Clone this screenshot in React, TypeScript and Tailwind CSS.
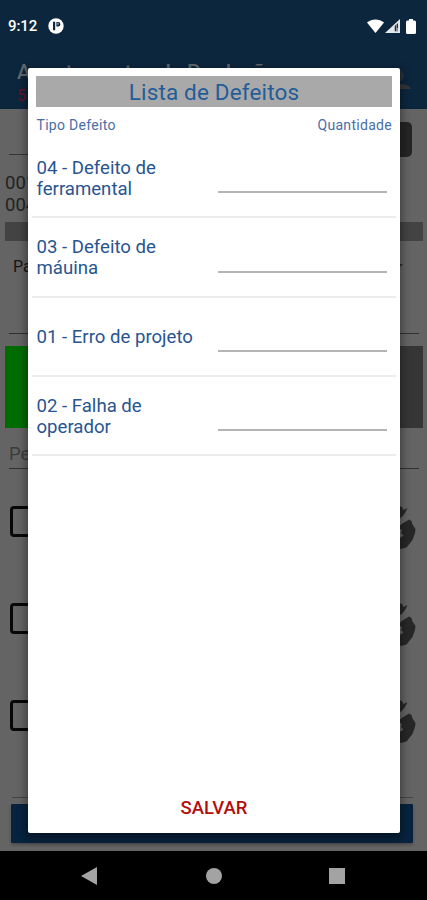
import React from 'react';

const defects = [
  { code: '04', name: 'Defeito de ferramental' },
  { code: '03', name: 'Defeito de máuina' },
  { code: '01', name: 'Erro de projeto' },
  { code: '02', name: 'Falha de operador' },
];

const StatusBar = () => (
  <div className="flex h-[52px] items-center px-2 text-white">
    <span className="text-[15px] font-medium leading-none tracking-[-0.1px]">9:12</span>
    <svg className="ml-[11px]" width="16" height="16" viewBox="0 0 16 16">
      <circle cx="8" cy="8" r="7.7" fill="#fff" />
      <path d="M5 3.800h2.200v8.400H5z M8.400 4h1.800a2.200 2.200 0 0 1 0 4.400H8.400z" fill="#0c263e" />
      <path d="M9.200 4.800h1.600v2H9.200z" fill="#8795a2" />
    </svg>
    <div className="flex-1" />
    <svg width="17" height="14" viewBox="0 0 17 14">
      <path d="M0 3.600C4.800-.4 12.200-.4 17 3.600L8.500 14z" fill="#fff" />
    </svg>
    <svg className="ml-px" width="15" height="14" viewBox="0 0 15 14">
      <path d="M15 0v14H0z" fill="#e4e7ea" />
      <path d="M13 3.500v9H9.500V7z" fill="#8b969f" />
      <path d="M10.500 6.500v5.500M12.500 5v4" stroke="#1c3348" strokeWidth="1.100" fill="none" />
    </svg>
    <svg className="ml-1.5 mr-[3px]" width="10" height="15" viewBox="0 0 10 15">
      <path d="M3 0h4v1.500h1.500Q10 1.500 10 3v10.500Q10 15 8.500 15h-7Q0 15 0 13.500V3q0-1.500 1.500-1.500H3z" fill="#fff" />
    </svg>
  </div>
);

const HandIcon = () => (
  <svg width="33" height="44" viewBox="0 0 33 44">
    <path d="M16 0l3 1L20.500 4L24.500 2L22 7L18 12L15 9z" fill="#272727" />
    <path d="M15 22L18 18.500L26 13.500L28.500 15L29.500 18.500L32.500 23L32 27L29.500 34L23.500 41.500L18 43L12 40L12 32L17.500 31.500L20.500 29.500L18 27L19 24z" fill="#272727" />
  </svg>
);

const BackgroundScreen = () => (
  <div className="flex h-[851px] flex-col bg-[#646464]">
    <header className="h-[109px] shrink-0 bg-[#0c263e]">
      <StatusBar />
      <div className="flex justify-between pl-[17px] pr-[14px] pt-2">
        <div>
          <div className="whitespace-nowrap text-[20.800px] font-medium leading-[24px] text-[#62686d]">Apontamentos de Produção</div>
          <div className="mt-[2px] text-[16px] leading-[20px] text-[#6c1126]">5</div>
        </div>
        <svg className="mt-[7px]" width="24" height="24" viewBox="0 0 24 24">
          <circle cx="9" cy="9" r="6" fill="#28323a" />
          <path d="M0 22q2-5 11-5q8 0 11 5z" fill="#34373a" />
        </svg>
      </div>
    </header>
    <div className="flex h-[48px] shrink-0 items-end justify-between pl-[9px] pr-[15px]">
      <div className="mb-[2px] h-px w-[300px] bg-[#353535]" />
      <div className="h-[35px] w-[42px] rounded-[5px] bg-[#252525]" />
    </div>
    <div className="mt-[16px] h-[43px] shrink-0 pl-[5px] text-[18.500px] leading-[21.500px] text-[#222]">
      <div>001</div>
      <div>004</div>
    </div>
    <div className="ml-[5px] mr-[4px] mt-[6px] h-[19px] shrink-0 bg-[#434343]" />
    <div className="flex h-[92px] shrink-0 justify-between pl-[13px] pr-[24px] pt-[16px]">
      <span className="text-[16px] leading-[20px] text-[#151515]">Parada</span>
      <svg className="mt-[7px]" width="9" height="5" viewBox="0 0 9 5">
        <path d="M0 0h9L4.500 4.500z" fill="#2c2c2c" />
      </svg>
    </div>
    <div className="ml-[9px] mr-[8px] h-px shrink-0 bg-[#303030]" />
    <div className="ml-[5px] mr-[4px] mt-[12px] flex h-[82px] shrink-0">
      <div className="flex-1 bg-[#006c00]" />
      <div className="flex-1 bg-[#363636]" />
    </div>
    <div className="ml-[9px] mr-[8px] mt-[14px] h-[27px] shrink-0 border-b border-[#303030] text-[18.500px] leading-[25px] text-[#3d3d3d]">
      Pesquisar
    </div>
    <div className="flex h-[292px] shrink-0 flex-col justify-between pb-[17px] pl-[10px] pr-[11px] pt-[37px]">
      {[0, 1, 2].map((row) => (
        <div key={row} className="flex h-[44px] items-start justify-between">
          <div className="h-[31px] w-[31px] rounded-[4px] border-[3px] border-[#080808]" />
          <HandIcon />
        </div>
      ))}
    </div>
    <div className="ml-[12px] mr-[14px] mt-[36px] h-px shrink-0 bg-[#454545]" />
    <div className="ml-[11px] mr-[14px] mt-[6px] h-[39px] shrink-0 rounded-[1px] bg-[#07233f] shadow-[0_2px_3px_rgba(0,0,0,0.25)]" />
  </div>
);

const DefectDialog = () => (
  <div className="absolute left-[28px] top-[68px] flex h-[765px] w-[372px] flex-col rounded-[2px] bg-white px-[4px] pt-[8px] shadow-[0_3px_9px_2px_rgba(0,0,0,0.4)]">
    <h1 className="mx-[4px] h-[31px] shrink-0 bg-[#a9a9a9] text-center text-[22.500px] leading-[33px] tracking-[0.150px] text-[#235d99]">
      Lista de Defeitos
    </h1>
    <div className="flex h-[32px] shrink-0 items-center justify-between pl-[4.500px] pr-[4px] pt-[5px] text-[14px] tracking-[0.300px] text-[#4a6ea6]">
      <span>Tipo Defeito</span>
      <span>Quantidade</span>
    </div>
    {defects.map((defect) => (
      <div key={defect.code} className="flex h-[79.300px] shrink-0 border-b-2 border-[#ececec] pl-[4.500px] pr-[9px]">
        <div className="flex w-[181.500px] items-center pr-[10px] pt-[3px] text-[18.600px] leading-[21.500px] text-[#285590]">
          <span>{defect.code} - {defect.name}</span>
        </div>
        <div className="mb-[23px] flex-1 border-b-2 border-[#b4b4b4]" />
      </div>
    ))}
    <div className="flex-1" />
    <button className="mb-[14px] h-[22px] text-[18.500px] font-medium leading-[22px] text-[#b50d0d]">SALVAR</button>
  </div>
);

const NavigationBar = () => (
  <nav className="flex h-[49px] items-center justify-between bg-black pl-[81px] pr-[82px]">
    <svg width="16" height="18" viewBox="0 0 16 18">
      <path d="M16 0v18L0 9z" fill="#a3a3a3" />
    </svg>
    <div className="ml-[2px] h-4 w-4 rounded-full bg-[#a3a3a3]" />
    <div className="h-4 w-4 bg-[#a3a3a3]" />
  </nav>
);

const App = () => {
  return (
    <div className="relative h-[900px] w-[427px] overflow-hidden font-['Roboto',sans-serif]">
      <BackgroundScreen />
      <NavigationBar />
      <DefectDialog />
    </div>
  );
};

export default App;
